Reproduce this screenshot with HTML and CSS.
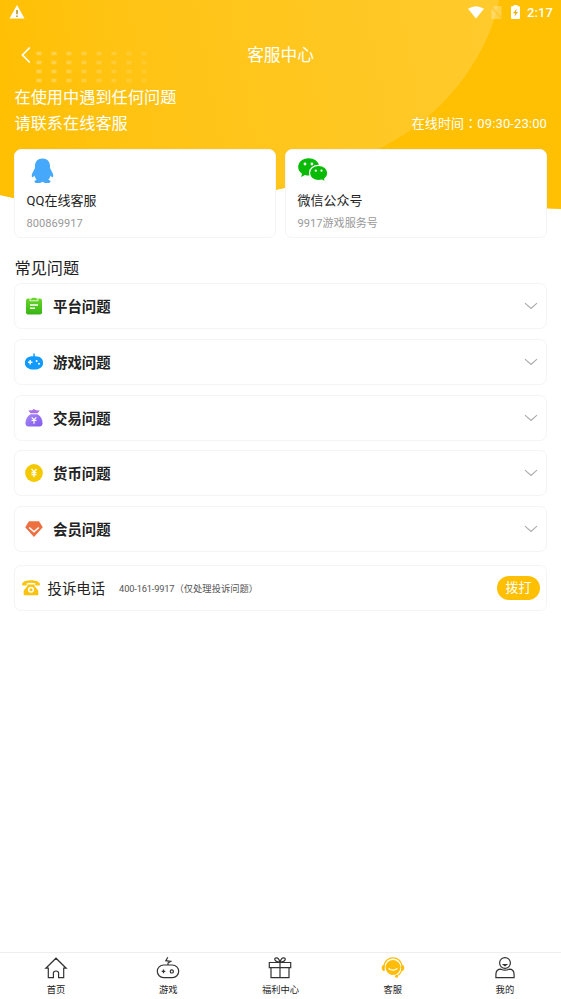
FILE: index.html
```html
<!DOCTYPE html>
<html lang="zh-CN">
<head>
<meta charset="utf-8">
<title>客服中心</title>
<link rel="stylesheet" href="styles.css">
</head>
<body>
<div class="app">
  <svg class="backdrop" viewBox="0 0 561 210" aria-hidden="true">
    <defs>
      <linearGradient id="disc" gradientUnits="userSpaceOnUse" x1="0" y1="90" x2="490" y2="0">
        <stop offset="0" stop-color="#ffbf02"/><stop offset=".25" stop-color="#ffc313"/><stop offset="1" stop-color="#ffca2c"/>
      </linearGradient>
      <linearGradient id="fade" gradientUnits="userSpaceOnUse" x1="36" y1="0" x2="150" y2="0">
        <stop offset="0" stop-color="#fff" stop-opacity=".3"/><stop offset="1" stop-color="#fff" stop-opacity=".09"/>
      </linearGradient>
      <clipPath id="wave"><path d="M0 0H561V209Q545 209 520 206C440 197 370 168 275 190C180 208 90 217 14 198L0 195Z"/></clipPath>
    </defs>
    <g clip-path="url(#wave)">
      <path fill="#ffbf02" d="M0 0H561V210H0Z"/>
      <path fill="url(#disc)" d="M0 0H499C490 50 451 108 395 140C350 166 300 190 240 210H0Z"/>
      <g stroke="url(#fade)" stroke-width="3.6" stroke-dasharray="5 10">
        <path d="M36.5 53.5L148 53.6M36.5 62.5L148 62.6M36.5 71.5L148 71.6M36.5 80.5L148 80.6"/>
      </g>
    </g>
  </svg>

  <div class="status">
    <svg width="16" height="14" viewBox="0 0 16 14"><path fill="#fff" d="M8 0L15.5 13.5H.5Z"/><path stroke="#b58c16" stroke-width="1.5" d="M8 5V9.3M8 10.4V12"/></svg>
    <div class="status-right">
      <svg width="16" height="13" viewBox="0 0 16 13"><path fill="#fff" d="M0 2.8Q8-2.2 16 2.8L8 12.6Z"/></svg>
      <svg class="sim" width="11" height="13" viewBox="0 0 11 13"><path fill="#fff" fill-opacity=".28" d="M3.5 0H10.5V13H.5V3Z"/><path stroke="#ffc62b" stroke-width="1.2" d="M1 1.5L10 12"/></svg>
      <svg class="battery" width="9" height="14" viewBox="0 0 9 14"><path fill="#fff" d="M2.5 0H6.5V1.3H8Q9 1.3 9 2.3V13Q9 14 8 14H1Q0 14 0 13V2.3Q0 1.3 1 1.3H2.5Z"/><path fill="#e8ae00" d="M5.7 3.7L2 8.2H4.2L3.4 11.5L7 7H4.9Z"/></svg>
      <span>2:17</span>
    </div>
  </div>

  <header class="title-bar">
    <svg class="back" width="12" height="18" viewBox="0 0 12 18"><path fill="none" stroke="#fff" stroke-width="1.7" d="M9.8 1.5L2.5 9L9.8 16.5"/></svg>
    <h1>客服中心</h1>
  </header>

  <div class="intro">
    <p>在使用中遇到任何问题<br>请联系在线客服</p>
    <span class="hours">在线时间<span class="colon" lang="zh-TW">：</span>09:30-23:00</span>
  </div>

  <div class="contacts">
    <div class="contact">
      <svg width="32" height="26" viewBox="0 0 32 26"><path fill="#45a8fa" d="M15.5 .6C10.8.6 8 3.7 8 8.2V10L5.2 15.4C4.6 17.3 4.6 19 5.5 19.2C6.2 19.4 7 18.2 7.5 17.5C7.8 19.2 8.6 20.6 9.6 21.7C6.4 22.9 6.8 25 10.7 25C13 25 14.7 24.6 15.5 23.8C16.3 24.6 18 25 20.3 25C24.2 25 24.6 22.9 21.4 21.7C22.4 20.6 23.2 19.2 23.5 17.5C24 18.2 24.8 19.4 25.5 19.2C26.4 19 26.4 17.3 25.8 15.4L23 10V8.2C23 3.7 20.2.6 15.5.6Z"/></svg>
      <h2>QQ在线客服</h2><p>800869917</p>
    </div>
    <div class="contact">
      <svg width="32" height="26" viewBox="0 0 32 26"><g transform="translate(-.7 0)"><path fill="#09bb07" d="M11.2.3C5.3.3.9 4.1.9 9C.9 11.8 2.2 14.1 4.7 15.7L3.8 18.9L7.7 16.9C9 17.3 10.2 17.5 12 17.5L22 8C21 3.3 16.7.3 11.2.3Z"/><path fill="#09bb07" stroke="#fff" stroke-width="1.2" d="M21.3 7.3C26.4 7.3 30.5 10.7 30.5 15.1C30.5 17.5 29.3 19.5 27.4 21L28.1 24L24.7 22.2Q23 22.7 21.3 22.7C16.1 22.7 12.2 19.4 12.2 15.1C12.2 10.7 16.1 7.3 21.3 7.3Z"/><g fill="#fff"><circle cx="7.7" cy="6" r="1.4"/><circle cx="14.6" cy="6" r="1.4"/><circle cx="18.5" cy="12.7" r="1.1"/><circle cx="24.2" cy="12.7" r="1.1"/></g></g></svg>
      <h2>微信公众号</h2><p>9917游戏服务号</p>
    </div>
  </div>

  <h2 class="section-title">常见问题</h2>
  <div class="topics">
    <div class="topic">
      <svg class="icon" viewBox="0 0 20 20"><defs><linearGradient id="green" x2="0" y2="1"><stop stop-color="#69d52b"/><stop offset="1" stop-color="#36b512"/></linearGradient></defs><rect x="2" y="2.5" width="16" height="16" rx="2" fill="url(#green)"/><path fill="#6bd32d" stroke="#fff" stroke-width=".8" d="M7.6 2.2Q7.8 1.3 10 1.3T12.4 2.2H14V4.8H6V2.2Z"/><path stroke="#fff" stroke-width="1.5" d="M6 9H14M6 12.3H11"/></svg>
      <h3>平台问题</h3><svg class="chevron" viewBox="0 0 14 8"><path d="M1 1.2L7 6.5L13 1.2"/></svg>
    </div>
    <div class="topic">
      <svg class="icon" viewBox="0 0 20 20"><path fill="#129bff" d="M9.3 1.6H10.8V4.3C16.5 4.2 19.1 7 19.1 11C19.1 15.2 15.5 17.6 10 17.6S.9 15.2 .9 11C.9 7 3.5 4.3 9.3 4.3Z"/><path stroke="#fff" stroke-width="1.4" d="M4 10.3H8.4M6.2 8.1V12.5"/><circle cx="12.6" cy="9" r="1" fill="#fff"/><circle cx="15" cy="11.8" r="1" fill="#fff"/></svg>
      <h3>游戏问题</h3><svg class="chevron" viewBox="0 0 14 8"><path d="M1 1.2L7 6.5L13 1.2"/></svg>
    </div>
    <div class="topic">
      <svg class="icon" viewBox="0 0 20 20"><defs><linearGradient id="violet" x2="1" y2="1"><stop stop-color="#a58af5"/><stop offset="1" stop-color="#8359ef"/></linearGradient></defs><path fill="#aa72e9" d="M4.3 2.5L8 2.2L10 1L12 2.2L15.7 2.5L13.5 5.2H6.5Z"/><path fill="url(#violet)" d="M6.5 6.2H13.5C17 8.3 18.7 12 18.5 15.5Q18.3 18.5 15.5 18.5H4.5Q1.7 18.5 1.5 15.5C1.3 12 3 8.3 6.5 6.2Z"/><path fill="none" stroke="#fff" stroke-width="1.2" d="M7.7 9.4L10 12L12.3 9.4M7.5 12.5H12.5M10 12V15.7"/></svg>
      <h3>交易问题</h3><svg class="chevron" viewBox="0 0 14 8"><path d="M1 1.2L7 6.5L13 1.2"/></svg>
    </div>
    <div class="topic">
      <svg class="icon" viewBox="0 0 20 20"><circle cx="10" cy="10" r="8.9" fill="#f5c900"/><path fill="none" stroke="#fff" stroke-width="1.3" d="M7.5 5.8L10 8.8L12.5 5.8M7.5 9.3H12.5M7.5 11.5H12.5M10 8.8V14.2"/></svg>
      <h3>货币问题</h3><svg class="chevron" viewBox="0 0 14 8"><path d="M1 1.2L7 6.5L13 1.2"/></svg>
    </div>
    <div class="topic">
      <svg class="icon" viewBox="0 0 20 20"><path fill="#ec7040" d="M5 2.2H15L18.8 8.2L10 18L1.2 8.2Z"/><path fill="none" stroke="#fff" stroke-width="1.6" d="M5.2 8.5L10 12.8L14.8 8.5"/></svg>
      <h3>会员问题</h3><svg class="chevron" viewBox="0 0 14 8"><path d="M1 1.2L7 6.5L13 1.2"/></svg>
    </div>
  </div>

  <div class="hotline">
    <svg width="18" height="17" viewBox="0 0 18 17"><g fill="#f9c30e"><path d="M.2 6.5V4.5C2 .2 16 .2 17.8 4.5V6.5H13.3V4.3Q9 3.3 4.7 4.3V6.5Z"/><path d="M5.5 5.5H12.5V7L16.3 11.5V16.2H1.7V11.5L5.5 7Z"/></g><circle cx="9" cy="10.8" r="2.3" fill="none" stroke="#fff" stroke-width="1.5"/></svg>
    <h3>投诉电话</h3>
    <span><span class="number">400-161-9917</span>（仅处理投诉问题）</span>
    <button type="button">拨打</button>
  </div>

  <nav class="tabs">
    <a><svg viewBox="0 0 24 24"><path d="M1.8 12.2L12 2.2L22.2 12.2H19.7V21.7H14.6V17.2Q14.6 15 12 15T9.4 17.2V21.7H4.3V12.2Z"/></svg>首页</a>
    <a><svg viewBox="0 0 24 24"><rect x="1.3" y="9" width="21.4" height="12.6" rx="6.3"/><path d="M12 9V7L14.7 5.3L9.8 4.7L11.8 1.3M5.7 15.4H9.3M7.5 13.6V17.2"/><circle cx="15.8" cy="15.4" r="1.6"/></svg>游戏</a>
    <a><svg viewBox="0 0 24 24"><path d="M1.3 6.5H22.7V11.7H1.3ZM3 11.7H21V21.6H3ZM12 6.5V21.6M12 6.2C5.8 6 5.7 1.6 8.5 1.8C10.5 1.9 11.4 4 12 6.2C12.6 4 13.5 1.9 15.5 1.8C18.3 1.6 18.2 6 12 6.2Z"/></svg>福利中心</a>
    <a class="active"><svg viewBox="0 0 24 24"><circle cx="12" cy="11.5" r="7.5" fill="#ffbd0a" stroke="none"/><path d="M3 11.2C3-1.2 21-1.2 21 11.2C21 15.3 18.5 18.8 15.4 20.1"/><path fill="#ffbd0a" stroke="none" d="M3.7 8.5V15.2C1.8 15 .7 13.8.7 11.9S1.8 8.8 3.7 8.5ZM20.3 8.5V15.2C22.2 15 23.3 13.8 23.3 11.9S22.2 8.8 20.3 8.5Z"/><circle cx="15.5" cy="20.3" r="1.5" fill="#ffbd0a" stroke="none"/><path stroke="#fff" stroke-width="1.3" d="M7.6 12.5Q12 15.8 16.4 12.5"/></svg>客服</a>
    <a><svg viewBox="0 0 24 24"><circle cx="12" cy="7" r="5.4"/><path d="M2.9 21.6V18.5C2.9 15.2 4.8 13.2 8 13.2Q12 15 16 13.2C19.2 13.2 21.1 15.2 21.1 18.5V21.6Z"/><path fill="#333" d="M10.5 8.6H13.5L12 9.8Z"/></svg>我的</a>
  </nav>
</div>
</body>
</html>
```
FILE: styles.css
```css
* { box-sizing: border-box; }
body, h1, h2, h3, p { margin: 0; }
body {
  background: #fff;
  color: #222;
  font-family: Roboto, "Noto Sans CJK SC", sans-serif;
}
h1, h2, h3 { font-weight: 400; }
svg { display: block; flex: none; }
.app {
  position: relative;
  display: flex;
  flex-direction: column;
  height: 999px;
  overflow: hidden;
}
.app > * { position: relative; flex: none; }
.app > .backdrop { position: absolute; top: 0; left: 0; width: 561px; height: 210px; }

.status {
  display: flex;
  align-items: center;
  justify-content: space-between;
  height: 24px;
  padding: 0 8px 0 9px;
  color: #fff;
}
.status-right { display: flex; align-items: center; font-size: 13px; font-weight: 500; letter-spacing: .1px; }
.sim { margin: 0 9px 0 7px; }
.battery { margin-right: 7px; }

.title-bar {
  display: grid;
  grid-template-columns: 40px 1fr 40px;
  align-items: center;
  height: 60px;
  padding-top: 2px;
  color: #fff;
}
.back { margin-left: 20px; }
.title-bar h1 { padding-top: 2px; font-size: 16.7px; line-height: 24px; text-align: center; }

.intro {
  display: flex;
  align-items: flex-end;
  justify-content: space-between;
  height: 65px;
  padding: 0 14px 12px 14.5px;
  color: #fff;
}
.intro p { font-size: 16.2px; line-height: 26px; }
.hours { font-size: 13px; line-height: 26px; letter-spacing: .12px; }
.colon { font-family: "Noto Sans CJK TC", sans-serif; line-height: 1; }

.contacts { display: grid; grid-template-columns: 1fr 1fr; gap: 9px; padding: 0 14px; }
.contact {
  height: 89px;
  padding: 8px 11.5px 0;
  border: 1px solid #f4f4f4;
  border-radius: 7px;
  background: #fff;
}
.contact h2 { margin-top: 8px; font-size: 13px; line-height: 18px; }
.contact p { margin-top: 6px; color: #999; font-size: 11.1px; line-height: 15px; }

.section-title { height: 45.4px; padding: 19px 14.5px 0; font-size: 16.2px; line-height: 24px; }
.topics { display: grid; gap: 9.6px; padding: 0 14px; }
.topic, .hotline {
  display: flex;
  align-items: center;
  height: 46px;
  border: 1px solid #f4f4f4;
  border-radius: 7px;
  background: #fff;
}
.topic { padding: 0 8px 0 9px; }
.icon { width: 20px; height: 20px; }
.topic h3 { flex: 1; margin-left: 9px; padding-top: 4px; font-size: 14.4px; font-weight: 700; line-height: 22px; }
.chevron { width: 14px; height: 8px; fill: none; stroke: #aaa; stroke-width: 1.1; }

.hotline { margin: 13.2px 14px 0; padding: 0 6px 0 7px; }
.hotline h3 { margin: 0 14px 0 7.5px; font-size: 14.4px; }
.hotline > span { flex: 1; color: #555; font-size: 9.3px; }
.number { letter-spacing: -.17px; }
.hotline button {
  width: 43px;
  height: 24px;
  padding: 0;
  border: 0;
  border-radius: 12px;
  background: #ffbf02;
  color: #fff;
  font: 13px/24px Roboto, "Noto Sans CJK SC", sans-serif;
}

.tabs {
  display: grid;
  grid-template-columns: repeat(5, 1fr);
  height: 47px;
  margin-top: auto;
  padding-top: 3px;
  border-top: 1px solid #eee;
  background: #fff;
}
.tabs a { display: flex; flex-direction: column; align-items: center; font-size: 9.3px; line-height: 14px; }
.tabs svg { width: 24px; height: 24px; margin-bottom: 3px; fill: none; stroke: #333; stroke-width: 1.2; }
.tabs .active svg { stroke: #ffbd0a; }
```
